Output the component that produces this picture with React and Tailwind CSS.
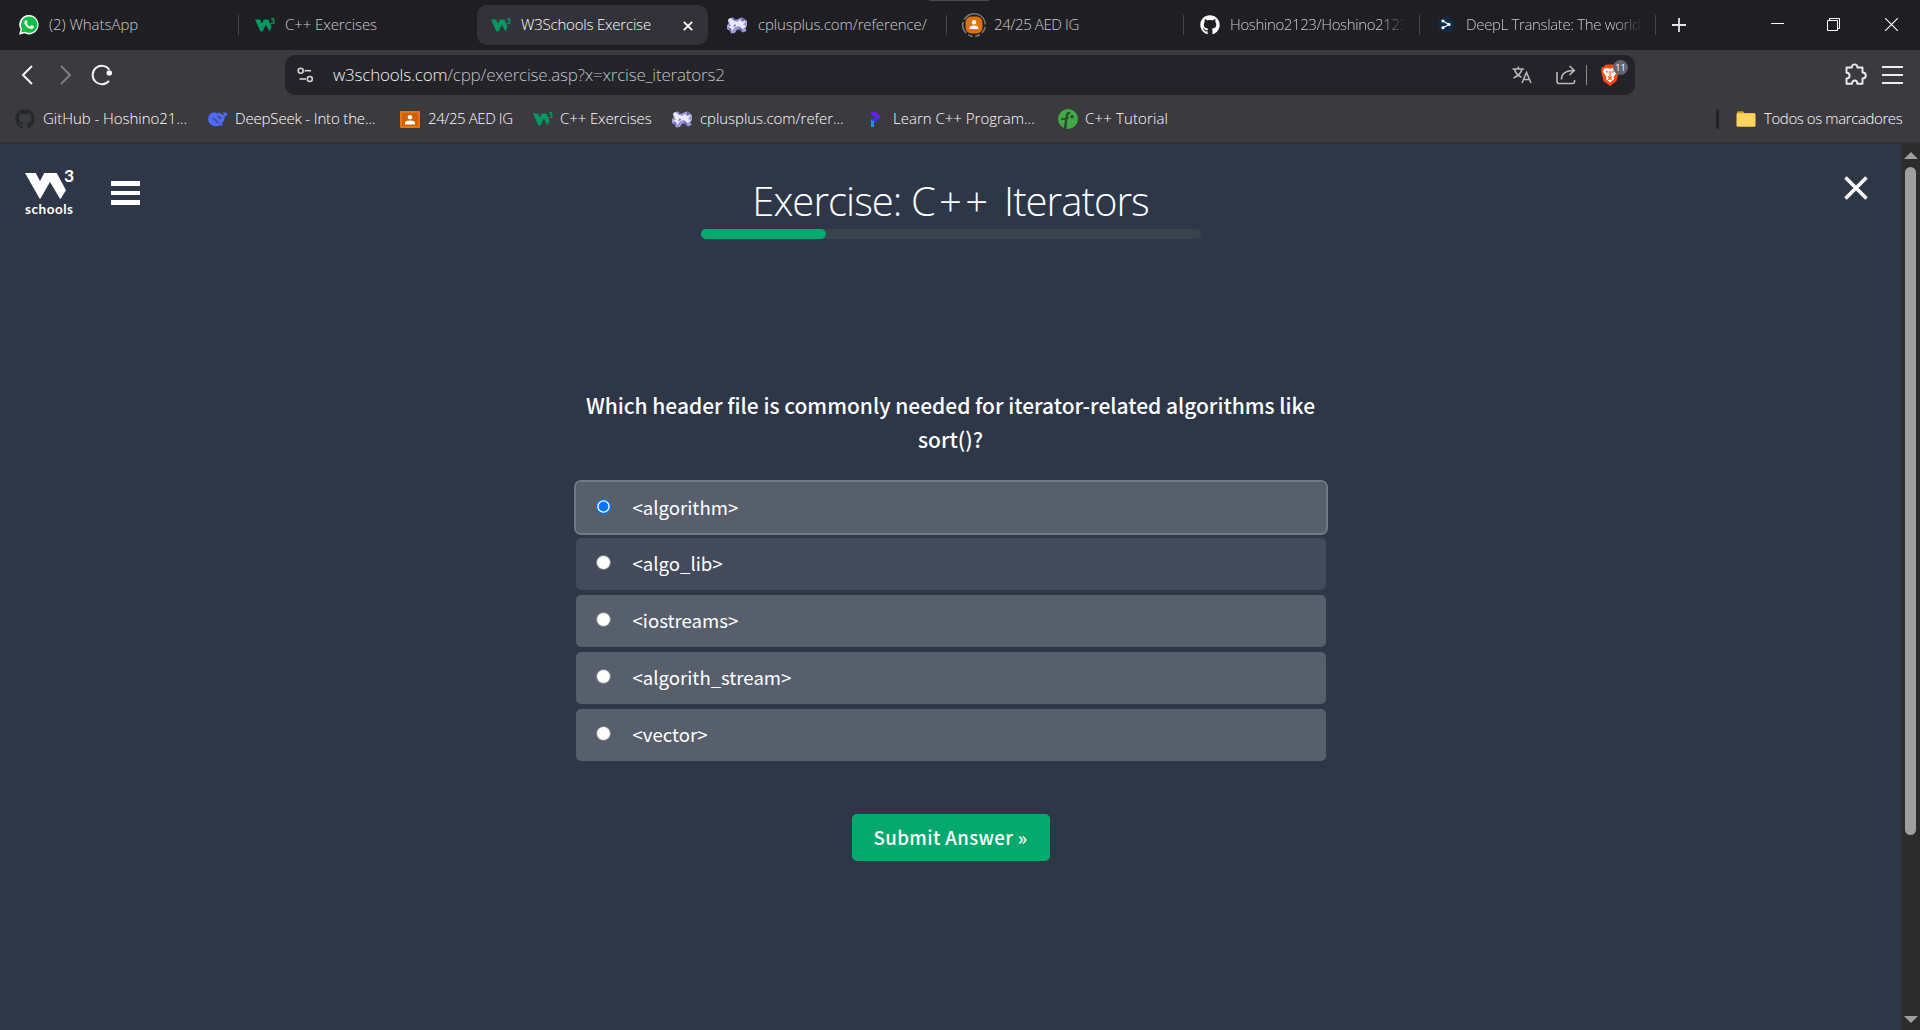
import React from "react";
import { FaGithub } from "react-icons/fa";

function W3Icon() {
  return (
    <svg width="20" height="14" viewBox="0 0 20 14">
      <path d="M0 1.5H5L7 5.4L9 1.5H13.4L16.6 8.4L14.4 13.5L10.9 6.5L7.6 13.5H5.4Z" fill="#059862" />
      <text x="15.6" y="6.2" fill="#059862" fontSize="8" fontWeight="700" fontFamily="Open Sans">3</text>
    </svg>
  );
}

function WhatsAppIcon() {
  return (
    <svg width="20" height="20" viewBox="0 0 20 20">
      <path d="M10.2 0A9.7 9.7 0 1 1 5.4 18.3L0 19.8L1.6 14.6A9.7 9.7 0 0 1 10.2 0Z" fill="#fff" />
      <circle cx="10.2" cy="9.7" r="8.3" fill="#10c044" />
      <path d="M2.2 17.6L3.4 13L7 16.4Z" fill="#10c044" />
      <path d="M6.2 5.4C6.9 4.7 7.7 4.9 7.9 5.5L8.5 7.1C8.6 7.5 8.1 8 7.8 8.4C8.4 9.7 9.5 10.8 11 11.5L12 10.4C12.3 10.1 12.6 10.2 12.9 10.3L14.6 11.1C15 11.3 15 11.7 14.8 12.3C14.3 13.6 12.6 14.2 11.2 13.8C8.4 13 6.5 11 5.5 8.8C5 7.6 5.3 6.2 6.2 5.4Z" fill="#fff" />
    </svg>
  );
}

function CppIcon() {
  return (
    <svg width="20" height="17" viewBox="0 0 20 17">
      <path d="M1 3L3 1L6 .5L9 3L11 2L13 1L15 .5L17 1.5L20 4V9L18.5 11L19.5 14L16 15.5L13 13L10 12.5L8 16L4 16.5L3 14L0 12V8L1.5 7Z" fill="#9a9ad8" />
      <path d="M1 3L3 1L6 3L10 5L13 3L15 5L19 4L16 8L19 9L16 12L12 9L8 10L5 14L4 11L0 10L4 9Z" fill="#e9e9fb" />
      <path d="M6 .5L9 3L7 4ZM15 .5L18 3L15 4ZM1 10L4 12V15ZM12 10L15 13V15L12 13ZM8 7L9 9L6 10Z" fill="#5d5da6" />
    </svg>
  );
}

function AedIcon() {
  return (
    <svg width="20" height="17" viewBox="0 0 20 17">
      <rect width="20" height="17" rx="1" fill="#e8750a" />
      <rect x="2" y="2" width="16" height="13" fill="#cf6206" />
      <circle cx="10" cy="6.3" r="2.2" fill="#fff" />
      <path d="M5 13.5V12C5 10 8 9.4 10 9.4S15 10 15 12V13.5Z" fill="#fff" />
    </svg>
  );
}

function AedLoadingIcon() {
  return (
    <svg width="26" height="26" viewBox="0 0 26 26">
      <circle cx="13" cy="13" r="11.3" fill="none" stroke="#77777b" strokeWidth="1.6" strokeDasharray="14 2.5 7 2.5 5 2.5 5 2.5 12 2.5 15 0.5" transform="rotate(-75 13 13)" />
      <rect x="4.5" y="4.5" width="17" height="17" rx="6" fill="#e0700a" />
      <circle cx="13" cy="10.3" r="2.2" fill="#fff" />
      <path d="M8.5 17V16C8.5 14 11 13.4 13 13.4S17.5 14 17.5 16V17Z" fill="#fff" />
    </svg>
  );
}

function DeepLIcon() {
  return (
    <svg width="16" height="18" viewBox="0 0 16 18">
      <path d="M8 0L15.5 4.3V13L11 15.6V18L8 16.6L.5 13V4.3Z" fill="#0f2b46" />
      <path d="M5 5L11 8.4L5 11.7" fill="none" stroke="#fff" strokeWidth="1.1" />
      <circle cx="5" cy="5" r="1.6" fill="#fff" />
      <circle cx="11" cy="8.4" r="1.6" fill="#fff" />
      <circle cx="5" cy="11.7" r="1.6" fill="#fff" />
    </svg>
  );
}

function DeepSeekIcon() {
  return (
    <svg width="20" height="16" viewBox="0 0 20 16">
      <path d="M19.8 2.2C19 2.5 18.3 2.2 17.6 1.8C16.9 1.4 16 .8 15.6 .4C15 1.5 15.6 3 16.4 3.7C15.4 4 14 3.6 13 2.7C12 1.8 11 1.2 9.8 1.8C10.4 2.4 10.8 3 10.6 3.4C8.5 1.6 5.5 1 3.2 2.3C.8 3.7 -.2 6.5 .2 9C.8 12.5 4 15.3 7.6 15.3C9.6 15.3 11 14.6 12 13.9C13 14.5 14.3 14.7 15.2 14.3C14.3 13.8 13.9 13.2 13.7 12.5C15.7 10.6 16.7 8 16.8 5.7C18.3 5.4 19.6 4 19.8 2.2Z" fill="#4d6bfe" />
      <path d="M4 6.8C6 6.8 7.5 7.8 9 9.8C9.8 10.8 11 11.9 12 12.6C9.8 12.8 8.4 11.6 7.400 10.4C6.500 9.2 5.2 8.4 4 8Z" fill="#3b3a3f" opacity=".6" />
      <path d="M9.5 5.6C11 5.5 12.3 6.8 12.5 8.2" fill="none" stroke="#3b3a3f" strokeWidth="1.1" />
    </svg>
  );
}

function ProgramizIcon() {
  return (
    <svg width="10" height="16" viewBox="0 0 10 16">
      <path d="M1 1H5.5L10 4.5V7L5 11V7.5L6 6L1 4Z" fill="#6a1cf0" />
      <path d="M1 8.5L6.5 6V10.2L4 11.5V16H1Z" fill="#1d8cf5" />
      <path d="M1 8.5L6.5 6L9.5 5.5L9 8L5 11Z" fill="#3a2ee0" />
    </svg>
  );
}

function TutorialIcon() {
  return (
    <svg width="20" height="20" viewBox="0 0 20 20">
      <circle cx="10" cy="10" r="10" fill="#41aa46" />
      <path d="M3 9.5L7.5 8.8C7.6 5.5 8.5 3 10.8 3C12 3 12.5 3.7 12.5 4.5L10.3 5.5L9.8 8L10.9 7.8L10.5 9.8L9.4 10L8.6 20L5.8 19.2L7 10.5L3 11Z" fill="#2b4a2f" />
      <circle cx="14" cy="7.8" r="1.8" fill="#2b4a2f" />
    </svg>
  );
}

function FolderIcon() {
  return (
    <svg width="20" height="16" viewBox="0 0 20 16">
      <path d="M1 1.5Q1 .3 2.2 .3H7L8.5 2H18.5V14H1Z" fill="#d99a1c" />
      <rect x=".5" y="2.2" width="19" height="13.5" rx="1.3" fill="#ffd45e" />
    </svg>
  );
}

const tabText = "font-['Open_Sans',sans-serif] font-[350] text-[15px] leading-5 pb-[2px] whitespace-nowrap";

function Tab({ icon, iconBox = "w-5 ml-[17px]", gap = "w-[10px]", label, tracking, active, fade, separator = true, width = "w-[236px]" }) {
  return (
    <div className={`relative flex h-[50px] shrink-0 items-center ${width}`}>
      {active && <div className="absolute left-[2px] top-[5px] h-[40px] w-[231px] rounded-[10px] bg-[#333238]" />}
      <div className={`relative flex shrink-0 justify-center ${iconBox}`}>{icon}</div>
      <div className={`shrink-0 ${gap}`} />
      <div className={`relative flex-1 ${fade ? "mr-[14px] overflow-hidden [mask-image:linear-gradient(to_right,#000_85%,transparent)]" : ""}`}>
        <div className={`${tabText} ${tracking} ${active ? "text-white" : "text-[#cbcbcd]"}`}>{label}</div>
      </div>
      {active && (
        <svg className="relative mr-[18px] mt-px shrink-0" width="10" height="10" viewBox="0 0 10 10">
          <path d="M.8 .8L9.2 9.2M9.2 .8L.8 9.2" stroke="#fff" strokeWidth="1.9" />
        </svg>
      )}
      {separator && <div className="absolute right-0 top-[15px] h-5 w-px bg-[#46454a]" />}
    </div>
  );
}

function Bookmark({ icon, label, tracking = "", width, gap = "gap-2" }) {
  return (
    <div className={`flex shrink-0 items-center ${gap} ${width}`}>
      <div className="flex w-5 shrink-0 justify-center">{icon}</div>
      <div className={`${tabText} text-white ${tracking}`}>{label}</div>
    </div>
  );
}

function TabStrip() {
  return (
    <div className="relative flex h-[50px] bg-[#1f1e23] pl-[2px]">
      <div className="absolute left-[929px] top-0 h-px w-[60px] bg-[#4a4a4d]" />
      <Tab icon={<WhatsAppIcon />} label="(2) WhatsApp" tracking="tracking-[-0.04px]" width="w-[237px]" />
      <Tab icon={<W3Icon />} iconBox="w-5 ml-[16px]" label="C++ Exercises" tracking="tracking-[-0.07px]" separator={false} />
      <Tab active icon={<W3Icon />} iconBox="w-5 ml-[16px]" label="W3Schools Exercise" tracking="tracking-[-0.2px]" separator={false} />
      <Tab icon={<CppIcon />} iconBox="w-5 ml-[16px]" gap="w-[11px]" label="cplusplus.com/reference/" tracking="tracking-[-0.12px]" />
      <Tab icon={<AedLoadingIcon />} iconBox="w-[26px] ml-[14px]" gap="w-[7px]" label="24/25 AED IG" tracking="tracking-[-0.4px]" width="w-[237px]" />
      <Tab icon={<FaGithub size={20} color="#fff" />} iconBox="w-5 ml-[16px]" label="Hoshino2123/Hoshino2123" tracking="tracking-[-0.38px]" fade />
      <Tab icon={<DeepLIcon />} iconBox="w-5 ml-[16px]" label="DeepL Translate: The world’s" tracking="tracking-[-0.35px]" fade />
      <div className="flex h-[50px] flex-1 items-center justify-between pl-[16px] pr-[22px]">
        <svg width="14" height="14" viewBox="0 0 14 14"><path d="M7 0V14M0 7H14" stroke="#e4e4e6" strokeWidth="1.8" /></svg>
        <div className="flex items-center">
          <div className="mb-[3px] mr-[43px] h-px w-[13px] bg-white" />
          <svg className="mb-px mr-[45px]" width="13" height="13" viewBox="0 0 13 13"><path d="M.5 2.5H10.5V12.5H.5ZM2.5 2.5V.5H12.5V10.5H10.5" fill="none" stroke="#fff" /></svg>
          <svg className="mb-px" width="13" height="13" viewBox="0 0 13 13"><path d="M0 0L13 13M13 0L0 13" stroke="#fff" strokeWidth="1.1" /></svg>
        </div>
      </div>
    </div>
  );
}

function Toolbar() {
  return (
    <div className="flex h-[50px] items-center bg-[#3b3a3f] pl-[21px] pr-[17px]">
      <svg width="12" height="20" viewBox="0 0 12 20"><path d="M11 1L2 10L11 19" fill="none" stroke="#f4f4f5" strokeWidth="2" /></svg>
      <svg className="ml-[27px]" width="12" height="20" viewBox="0 0 12 20"><path d="M1 1L10 10L1 19" fill="none" stroke="#7e7d82" strokeWidth="2" /></svg>
      <svg className="ml-[18px] mr-px" width="23" height="22" viewBox="0 0 23 22">
        <path d="M19.3 5.6A9.2 9.2 0 1 0 19 16.8" fill="none" stroke="#f4f4f5" strokeWidth="1.9" />
        <circle cx="19.3" cy="9" r="2.8" fill="#f4f4f5" />
      </svg>
      <div className="ml-[171px] flex h-10 w-[1350px] items-center rounded-[10px] bg-[#242329] pl-3">
        <svg width="17" height="16" viewBox="0 0 17 16" fill="none" stroke="#d4d4d6" strokeWidth="1.6">
          <circle cx="3.7" cy="3.7" r="2.5" /><path d="M7.5 3.7H14" /><circle cx="12.8" cy="12" r="2.5" /><path d="M2.5 12H9" />
        </svg>
        <div className="ml-[19px] flex-1 whitespace-nowrap font-['Open_Sans',sans-serif] text-[17px] font-[350] leading-6 tracking-[-0.2px] text-[#c2c2c5]">
          <span className="text-[#f2f2f3]">w3schools.com</span>/cpp/exercise.asp?x=xrcise_iterators2
        </div>
        <svg width="20" height="18" viewBox="0 0 20 18" fill="none" stroke="#b9b9bc" strokeWidth="1.5">
          <path d="M.5 3H12M6.3 .5V3M2.5 3C3.5 7.5 6.5 10 9.5 11.2M10 3C9 7.5 5 10.5 1.5 12M10 17L14.5 6.5L19 17M11.5 13.5H17.5" />
        </svg>
        <svg className="ml-[24px]" width="20" height="20" viewBox="0 0 20 20" fill="none" stroke="#b9b9bc" strokeWidth="1.6">
          <path d="M1 7V16.5Q1 18.5 3 18.5H16.5Q18.5 18.5 18.5 16.5V15M5.5 14.5C5.5 8.5 9 5.5 18 5.5M13.5 1L18.3 5.5L13.5 10" />
        </svg>
        <div className="ml-[10px] h-5 w-px bg-[#8c8c90]" />
        <div className="relative ml-[13px] mr-[7px] flex h-[24px] w-[28px] items-center">
          <svg width="20" height="24" viewBox="0 0 20 24">
            <path d="M6 1.5H14L16 3.5L18.5 4.5L19 8L16.5 18L10 23L3.5 18L1 8L1.5 4.5L4 3.5Z" fill="#fb4a0f" />
            <path d="M4 5.5L8 5L10 6L12 5L16 5.5L17 9L13.5 14L14 16L10 19.5L6 16L6.5 14L3 9Z" fill="#fff" />
            <path d="M6 8.5L8.5 9.3M14 8.5L11.5 9.3M10 8V13M8 13.5L10 14.8L12 13.5M8 16.5L10 15.7L12 16.5" stroke="#fb4a0f" strokeWidth="1.2" fill="none" />
          </svg>
          <div className="absolute left-[13px] top-[-3px] flex h-[15px] w-[15px] items-center justify-center rounded-full bg-[#63646f] font-['Open_Sans',sans-serif] text-[9px] font-medium leading-none text-white">11</div>
        </div>
      </div>
      <div className="flex flex-1 items-center justify-end">
        <svg className="mr-[15px] mt-[-2px]" width="22" height="22" viewBox="0 0 22 22" fill="none" stroke="#ececee" strokeWidth="1.9" strokeLinejoin="round">
          <path d="M1.5 4.5H6.8C6.8 .3 12.4 .3 12.4 4.5H17.5V9.5C21.9 9.5 21.9 15.5 17.5 15.5V20.7H12.3C12.3 16.5 7 16.5 7 20.7H1.5V15.5C5.6 15.5 5.6 9.8 1.5 9.8Z" />
        </svg>
        <div className="flex h-[18px] w-[21px] flex-col justify-between">
          <div className="h-[2px] bg-[#ececee]" />
          <div className="h-[2px] bg-[#ececee]" />
          <div className="h-[2px] bg-[#ececee]" />
        </div>
      </div>
    </div>
  );
}

function BookmarksBar() {
  return (
    <div className="flex h-[44px] items-center border-b-2 border-[#302f34] bg-[#3b3a3f] pb-[4px] pl-[15px] pr-[16px]">
      <Bookmark width="w-[193px]" icon={<FaGithub size={20} color="#24292e" />} label="GitHub - Hoshino21..." tracking="tracking-[-0.04px]" />
      <Bookmark width="w-[192px]" icon={<DeepSeekIcon />} label="DeepSeek - Into the..." tracking="tracking-[-0.16px]" gap="gap-[7px]" />
      <Bookmark width="w-[133px]" icon={<AedIcon />} label="24/25 AED IG" tracking="tracking-[-0.42px]" />
      <Bookmark width="w-[139px]" icon={<W3Icon />} label="C++ Exercises" tracking="tracking-[-0.1px]" gap="gap-[7px]" />
      <Bookmark width="w-[193px]" icon={<CppIcon />} label="cplusplus.com/refer..." tracking="tracking-[-0.05px]" />
      <Bookmark width="w-[193px]" icon={<ProgramizIcon />} label="Learn C++ Program..." />
      <Bookmark width="w-[130px]" icon={<TutorialIcon />} label="C++ Tutorial" tracking="tracking-[0.14px]" gap="gap-[7px]" />
      <div className="flex flex-1 items-center justify-end">
        <div className="mr-[17px] h-5 w-[3px] rounded-sm bg-[#232227]" />
        <Bookmark width="w-[168px]" icon={<FolderIcon />} label="Todos os marcadores" tracking="tracking-[-0.4px]" />
      </div>
    </div>
  );
}

function W3Logo() {
  return (
    <svg width="50" height="50" viewBox="0 0 50 50">
      <path d="M0 5H10.7L15 13L19.3 5H31.7L41 22.3L35.3 31.3L25 14L15 31.3Z" fill="#fff" />
      <text x="39" y="14" fill="#fff" fontFamily="Lato" fontWeight="700" fontSize="17.5" textLength="9">3</text>
      <text x="0" y="45.5" fill="#fff" fontFamily="Lato" fontWeight="700" fontSize="13.5" textLength="48">schools</text>
    </svg>
  );
}

function Option({ label, state }) {
  const look = {
    selected: "h-[51px] bg-[#585f6c] outline-2 outline-[#717984]",
    hover: "h-[52px] bg-[#424a5b]",
    idle: "h-[52px] bg-[#585f6c]",
  }[state];
  return (
    <div className={`flex items-center rounded-[5px] pl-[20px] ${look}`}>
      {state === "selected" ? (
        <svg className="mt-[-2px]" width="15" height="15" viewBox="0 0 15 15">
          <circle cx="7.5" cy="7.5" r="7.5" fill="#0075ff" />
          <circle cx="7.5" cy="7.5" r="6.2" fill="#fff" />
          <circle cx="7.5" cy="7.5" r="4.9" fill="#0075ff" />
        </svg>
      ) : (
        <span className="mt-[-3px] h-[15px] w-[15px] rounded-full border border-[#767676] bg-white" />
      )}
      <span className={`ml-[22px] font-['Noto_Sans_CJK_SC',sans-serif] text-[18.6px] leading-[28px] text-white ${state === "selected" ? "pb-px" : "pb-[3px]"}`}>{label}</span>
    </div>
  );
}

function Exercise() {
  return (
    <div className="flex flex-1 bg-[#2d3748]">
      <main className="flex flex-1 items-start justify-between">
        <div className="flex w-[200px] items-start pl-[25px] pt-[24px]">
          <W3Logo />
          <div className="ml-[36px] mt-[13px] flex h-[24px] w-[29px] flex-col justify-between">
            <div className="h-[5px] bg-white" />
            <div className="h-[4px] bg-white" />
            <div className="h-[5px] bg-white" />
          </div>
        </div>
        <div className="flex w-[750px] flex-col items-center">
          <h1 className="mt-[28px] whitespace-nowrap font-['Open_Sans',sans-serif] text-[40px] font-[350] leading-[57px] tracking-[-0.95px] text-white">
            Exercise: <span className="tracking-[3.4px]">C++</span> <span className="ml-[3px]">Iterators</span>
          </h1>
          <div className="h-[10px] w-[500px] rounded-full bg-[#38444d]"><div className="h-full w-1/4 rounded-full bg-[#04aa6d]" /></div>
          <p className="mt-[149px] text-center font-['Noto_Sans_CJK_SC',sans-serif] text-[21px] font-medium leading-[34px] tracking-[-0.02px] text-white">Which header file is commonly needed for iterator-related algorithms like sort()?</p>
          <div className="mt-[26px] flex w-full flex-col gap-[5px]">
            <Option state="selected" label="<algorithm>" />
            <Option state="hover" label="<algo_lib>" />
            <Option state="idle" label="<iostreams>" />
            <Option state="idle" label="<algorith_stream>" />
            <Option state="idle" label="<vector>" />
          </div>
          <button className="mt-[53px] h-[47px] w-[198px] rounded-[5px] bg-[#04aa6d] pb-px font-['Noto_Sans_CJK_SC',sans-serif] text-[18.6px] font-medium tracking-[0.4px] text-white">Submit Answer »</button>
        </div>
        <div className="flex w-[200px] justify-end pr-[33px] pt-[32px]">
          <svg width="24" height="24" viewBox="0 0 24 24"><path d="M1.5 1.5L22.5 22.5M22.5 1.5L1.5 22.5" stroke="#fff" strokeWidth="3.6" /></svg>
        </div>
      </main>
      <div className="flex w-[19px] flex-col items-center bg-[#2c2c2c] pb-[7px] pt-[8px]">
        <svg width="14" height="7" viewBox="0 0 14 7"><path d="M7 0L14 7H0Z" fill="#9f9f9f" /></svg>
        <div className="mt-[8px] h-[668px] w-[11px] rounded-full bg-[#9f9f9f]" />
        <svg className="mt-auto" width="14" height="7" viewBox="0 0 14 7"><path d="M0 0H14L7 7Z" fill="#9f9f9f" /></svg>
      </div>
    </div>
  );
}

export default function App() {
  return (
    <div className="flex h-[1030px] w-[1920px] flex-col overflow-hidden bg-[#2d3748]">
      <TabStrip />
      <Toolbar />
      <BookmarksBar />
      <Exercise />
    </div>
  );
}
